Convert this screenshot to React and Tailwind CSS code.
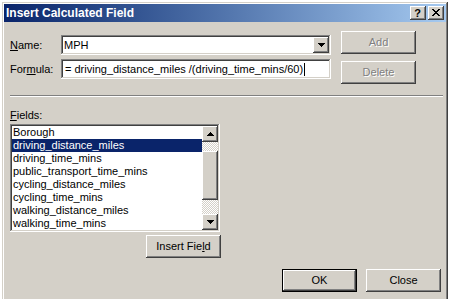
import React from "react";

const raised =
  "shadow-[inset_-1px_-1px_0_#404040,inset_1px_1px_0_#fff,inset_-2px_-2px_0_#808080,inset_2px_2px_0_#d4d0c8]";
const sunken =
  "shadow-[inset_-1px_-1px_0_#fff,inset_1px_1px_0_#808080,inset_-2px_-2px_0_#d4d0c8,inset_2px_2px_0_#404040]";

function Btn({ children, disabled, className = "" }) {
  return (
    <div
      className={`w-[75px] h-[23px] bg-[#d4d0c8] shadow-[inset_-1px_-1px_0_#404040,inset_1px_1px_0_#fff,inset_-2px_-2px_0_#808080,inset_2px_2px_0_#d4d0c8] flex items-center justify-center text-[11px] leading-[13px] ${
        disabled ? "text-[#808080] [text-shadow:1px_1px_0_#fff]" : "text-black"
      } ${className}`}
    >
      {children}
    </div>
  );
}

function ArrowDown() {
  return (
    <svg width="7" height="4" viewBox="0 0 7 4">
      <path d="M0 0h7v1h-1v1h-1v1h-1v1h-1v-1h-1v-1h-1v-1h-1z" fill="#000" />
    </svg>
  );
}
function ArrowUp() {
  return (
    <svg width="7" height="4" viewBox="0 0 7 4">
      <path d="M3 0h1v1h1v1h1v1h1v1h-7v-1h1v-1h1v-1h1z" fill="#000" />
    </svg>
  );
}

const items = [
  "Borough",
  "driving_distance_miles",
  "driving_time_mins",
  "public_transport_time_mins",
  "cycling_distance_miles",
  "cycling_time_mins",
  "walking_distance_miles",
  "walking_time_mins",
];

export default function App() {
  return (
    <div className="w-[450px] h-[299px] overflow-hidden bg-white pl-[2px] pt-[2px] [font-family:'Liberation_Sans',Arial,sans-serif] text-black">
      <div className="w-[446px] h-[320px] bg-[#d4d0c8] p-[2px] shadow-[inset_-1px_-1px_0_#404040,inset_1px_1px_0_#d4d0c8,inset_-2px_-2px_0_#808080,inset_2px_2px_0_#fff] flex flex-col">
        {/* Title bar */}
        <div className="h-[18px] bg-linear-to-r from-[#0a246a] to-[#a6caf0] flex items-center pl-[2px] pr-[2px]">
          <span className="text-white font-bold text-[12px] leading-[14px] flex-1">
            Insert Calculated Field
          </span>
          <div className={`w-[16px] h-[14px] bg-[#d4d0c8] ${raised} flex items-center justify-center text-[11px] font-bold leading-[14px] pr-[1px] pb-[1px]`}>
            ?
          </div>
          <div className={`ml-[2px] w-[16px] h-[14px] bg-[#d4d0c8] ${raised} flex items-center justify-center pr-[1px] pb-[1px]`}>
            <svg width="8" height="7" viewBox="0 0 8 7">
              <path
                d="M0 0h2v1h1v1h2v-1h1v-1h2v1h-1v1h-1v1h-1v1h1v1h1v1h1v1h-2v-1h-1v-1h-2v1h-1v1h-2v-1h1v-1h1v-1h1v-1h-1v-1h-1v-1h-1z"
                fill="#000"
              />
            </svg>
          </div>
        </div>

        {/* Body */}
        <div className="flex flex-col pl-[6px] text-[11px] leading-[13px]">
          <div className="flex mt-[9px]">
            <div className="flex flex-col pt-[4px] gap-[4px]">
              <div className="flex items-center h-[20px]">
                <span className="w-[51px]">
                  <span className="underline">N</span>ame:
                </span>
                <div className={`w-[270px] h-[20px] bg-white ${sunken} flex items-center pl-[3px] pr-[2px]`}>
                  <span className="flex-1">MPH</span>
                  <div className={`w-[16px] h-[16px] bg-[#d4d0c8] ${raised} flex items-center justify-center`}>
                    <ArrowDown />
                  </div>
                </div>
              </div>
              <div className="flex items-center h-[20px]">
                <span className="w-[51px]">
                  For<span className="underline">m</span>ula:
                </span>
                <div className={`w-[270px] h-[20px] bg-white ${sunken} flex items-center pl-[4px]`}>
                  <span>= driving_distance_miles /(driving_time_mins/60)</span>
                  <span className="w-[1px] h-[13px] bg-black ml-[1px]" />
                </div>
              </div>
            </div>
            <div className="flex flex-col gap-[7px] ml-[10px]">
              <Btn disabled>Add</Btn>
              <Btn disabled>Delete</Btn>
            </div>
          </div>

          {/* separator */}
          <div className="mt-[11px] w-[433px] h-[2px] border-t border-t-[#808080] border-b border-b-white" />

          <div className="mt-[12px] h-[13px]">
            <span className="underline">F</span>ields:
          </div>

          <div className="flex flex-col w-[211px]">
            <div className={`mt-[2px] w-[210px] h-[108px] bg-white ${sunken} p-[2px] flex`}>
              <div className="flex-1 flex flex-col">
                {items.map((t, i) => (
                  <div
                    key={t}
                    className={`h-[13px] leading-[13px] pl-[1px] whitespace-nowrap ${
                      i === 1 ? "bg-[#0a246a] text-white" : ""
                    }`}
                  >
                    {t}
                  </div>
                ))}
              </div>
              <div className="w-[16px] flex flex-col">
                <div className={`h-[16px] bg-[#d4d0c8] ${raised} flex items-center justify-center`}>
                  <ArrowUp />
                </div>
                <div className="h-[9px] bg-[repeating-conic-gradient(#d4d0c8_0_25%,#fff_0_50%)] bg-[length:2px_2px]" />
                <div className={`h-[49px] bg-[#d4d0c8] ${raised}`} />
                <div className="flex-1 bg-[repeating-conic-gradient(#d4d0c8_0_25%,#fff_0_50%)] bg-[length:2px_2px]" />
                <div className={`h-[16px] bg-[#d4d0c8] ${raised} flex items-center justify-center`}>
                  <ArrowDown />
                </div>
              </div>
            </div>
            <Btn className="mt-[3px] self-end">
              <span>
                Insert Fie<span className="underline">l</span>d
              </span>
            </Btn>
          </div>

          <div className="flex justify-end gap-[9px] mt-[11px] pr-[5px]">
            <div className="border border-black">
              <div className={`w-[73px] h-[21px] bg-[#d4d0c8] ${raised} flex items-center justify-center`}>
                OK
              </div>
            </div>
            <Btn>Close</Btn>
          </div>
        </div>
      </div>
    </div>
  );
}
